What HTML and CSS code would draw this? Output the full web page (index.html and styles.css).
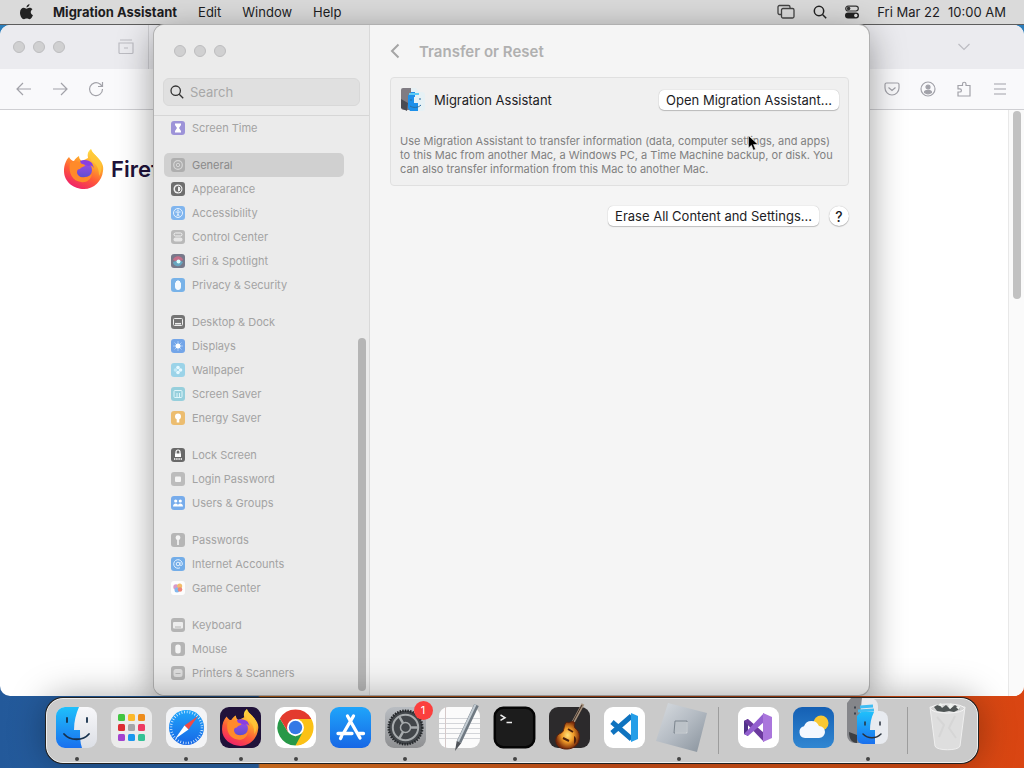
FILE: index.html
```html
<!doctype html>
<html lang="en">
<head>
    <meta charset="UTF-8">
    <meta name="viewport" content="width=device-width, initial-scale=1.0">
    <title>Migration Assistant</title>
    <link rel="stylesheet" href="styles.css">
</head>
<body>
<svg class="defs" aria-hidden="true">
    <defs>
        <linearGradient id="g-fox" x1=".8" y1="0" x2=".3" y2="1">
            <stop offset="0" stop-color="#fff44f"/>
            <stop offset=".35" stop-color="#ffa62b"/>
            <stop offset=".65" stop-color="#ff5a38"/>
            <stop offset="1" stop-color="#ee1f6b"/>
        </linearGradient>
        <linearGradient id="g-globe" x1="0" y1="0" x2="0" y2="1">
            <stop offset="0" stop-color="#a04be8"/>
            <stop offset="1" stop-color="#5c4fd0"/>
        </linearGradient>
        <linearGradient id="g-finder" x1="0" y1="0" x2="0" y2="1">
            <stop offset="0" stop-color="#1fc0fb"/>
            <stop offset="1" stop-color="#1a70ee"/>
        </linearGradient>
        <linearGradient id="g-light" x1="0" y1="0" x2="0" y2="1">
            <stop offset="0" stop-color="#f8f8fa"/>
            <stop offset="1" stop-color="#dcdfe6"/>
        </linearGradient>
        <linearGradient id="g-blue" x1="0" y1="0" x2="0" y2="1">
            <stop offset="0" stop-color="#1fa5fa"/>
            <stop offset="1" stop-color="#1767e6"/>
        </linearGradient>
        <linearGradient id="g-weather" x1="0" y1="0" x2="0" y2="1">
            <stop offset="0" stop-color="#1560b4"/>
            <stop offset="1" stop-color="#3187d2"/>
        </linearGradient>
        <linearGradient id="g-metal" x1="0" y1="0" x2="0" y2="1">
            <stop offset="0" stop-color="#b9bdc2"/>
            <stop offset="1" stop-color="#8f9092"/>
        </linearGradient>
        <linearGradient id="g-roblox" x1="0" y1="0" x2="1" y2="1">
            <stop offset="0" stop-color="#d9dde1"/>
            <stop offset=".5" stop-color="#b4bbc3"/>
            <stop offset="1" stop-color="#87919b"/>
        </linearGradient>
        <radialGradient id="g-guitar">
            <stop offset="0" stop-color="#ffe27a"/>
            <stop offset=".5" stop-color="#f09a28"/>
            <stop offset="1" stop-color="#7a2c0c"/>
        </radialGradient>
        <symbol id="fox" viewBox="0 0 40 40">
            <path fill="url(#g-fox)" d="M5 8c1 2 3 4 5 4 1-2 3-4 5-5 0 2 1 4 3 5l6-3c-1-4 0-7 3-9 1 4 4 5 7 9 4 4 6 8 5 13-1 10-9 18-19 18S0 33 0 22c0-6 2-11 5-14z"/>
            <circle cx="20" cy="21" r="8" fill="url(#g-globe)"/>
            <path fill="#ff8a2a" d="M6 14c4-3 9-2 12 1 2 0 3 1 3 2-2 1-4 1-5 3-2 0-3 1-3 3 0 4 4 6 8 5 3 0 5-2 7-3-1 6-6 9-11 8C9 32 4 25 6 14z"/>
            <path fill="#8a3fe0" d="M16 12c4-2 9-1 12 2l2 5c-2-3-4-3-6-2l-4-2-3-1z"/>
            <path fill="#ffc638" opacity=".8" d="M27 0c1 4 4 5 7 9 5 6 4 14 1 18 0-7-2-11-6-14-4-3-4-9-2-13z"/>
        </symbol>
    </defs>
</svg>

<header class="menubar">
    <svg class="apple" viewBox="0 0 14 17"><path d="M10.200 0c.2 1.600-1.300 3.600-3.200 3.700C6.800 2 8.500.2 10.200 0zM7 4.900c.8 0 1.700-1 3.300-1 1.200 0 2.300.6 3.100 1.600-2.700 1.600-2.200 5.300.6 6.300-.6 1.700-2.100 4.500-3.700 4.500-1.200 0-1.600-.7-3-.7s-1.900.7-3 .7C2.300 16.400 0 12.700 0 9.300c0-3.500 2.100-5.300 4.100-5.300 1.300 0 2.200.9 2.900.9z"/></svg>
    <nav class="menus">
        <button class="menu menu-app">Migration Assistant</button>
        <button class="menu">Edit</button>
        <button class="menu">Window</button>
        <button class="menu">Help</button>
    </nav>
    <div class="status">
        <svg width="18" height="16" viewBox="0 0 18 16" fill="none" stroke="#444" stroke-width="1.300"><path d="M4 10.500H2.500A1.500 1.500 0 0 1 1 9V3a1.500 1.500 0 0 1 1.500-1.500h9A1.500 1.500 0 0 1 13 3v1"/><rect x="4.500" y="4.500" width="12.500" height="9.500" rx="1.500"/></svg>
        <svg width="14" height="14" viewBox="0 0 14 14" fill="none" stroke="#222" stroke-width="1.500"><circle cx="6" cy="6" r="4.700"/><path d="M9.500 9.500l3.700 3.700"/></svg>
        <svg width="14" height="14" viewBox="0 0 14 14"><rect x=".7" y="1.200" width="12.600" height="4.800" rx="2.400" fill="none" stroke="#333" stroke-width="1.200"/><circle cx="3.600" cy="3.600" r="1.800" fill="#333"/><rect y="7.500" width="14" height="6" rx="3" fill="#222"/><circle cx="10.800" cy="10.500" r="1.700" fill="#ddd"/></svg>
        <span class="date">Fri Mar 22</span>
        <span class="time">10:00 AM</span>
    </div>
</header>

<main class="desktop">
    <section class="window browser">
        <div class="tabbar">
            <div class="lights"><i></i><i></i><i></i></div>
            <button class="tool tool-archive" aria-label="Recent browsing"><svg viewBox="0 0 16 16"><path d="M2 1h12M1 4h14v9.500a1 1 0 0 1-1 1H2a1 1 0 0 1-1-1zM6 9h4"/></svg></button>
            <span class="tab-split"></span>
            <button class="tool tool-tabs" aria-label="List all tabs"><svg viewBox="0 0 16 16"><path d="M2.500 5L8 10.500 13.500 5"/></svg></button>
        </div>
        <div class="toolbar">
            <button class="tool" aria-label="Back"><svg viewBox="0 0 16 16"><path d="M15 8H1M7 2L1 8l6 6"/></svg></button>
            <button class="tool" aria-label="Forward"><svg viewBox="0 0 16 16"><path d="M1 8h14M9 2l6 6-6 6"/></svg></button>
            <button class="tool" aria-label="Reload"><svg viewBox="0 0 16 16"><path d="M14.500 8A6.500 6.500 0 1 1 12 3l2 2M14.500 1v4.500H10"/></svg></button>
            <span class="spacer"></span>
            <button class="tool" aria-label="Pocket"><svg viewBox="0 0 16 16"><path d="M2.500 2h11A1.500 1.500 0 0 1 15 3.500V7A7 7 0 0 1 1 7V3.500A1.500 1.500 0 0 1 2.500 2zM4.500 6.500L8 9.500l3.500-3"/></svg></button>
            <button class="tool" aria-label="Account"><svg viewBox="0 0 16 16"><circle cx="8" cy="8" r="7"/><circle cx="8" cy="6" r="2" fill="#a2a2a9"/><path fill="#a2a2a9" d="M4.500 11.500c0-3 7-3 7 0-2 1.500-5 1.500-7 0z"/></svg></button>
            <button class="tool" aria-label="Extensions"><svg viewBox="0 0 16 16"><path d="M2 4.500h4.500V3a1.700 1.700 0 0 1 3.500 0v1.500h4V15H2v-4h1.800a1.600 1.600 0 0 0 0-3.200H2z"/></svg></button>
            <button class="tool" aria-label="Menu"><svg viewBox="0 0 16 16"><path d="M2 3h12M2 8h12M2 13h12"/></svg></button>
        </div>
        <div class="page">
            <div class="brand">
                <svg width="40" height="40"><use href="#fox"/></svg>
                <span>Firefox</span>
            </div>
            <div class="page-scroll"><i></i></div>
        </div>
    </section>

    <section class="window settings">
        <aside class="sidebar">
            <div class="sidebar-top">
                <div class="lights"><i></i><i></i><i></i></div>
                <label class="search">
                    <svg width="14" height="14" viewBox="0 0 14 14" fill="none" stroke="#333" stroke-width="1.300"><circle cx="5.700" cy="5.700" r="4.700"/><path d="M9.200 9.200l4 4"/></svg>
                    <input type="text" placeholder="Search" aria-label="Search">
                </label>
            </div>
            <nav class="list">
                <div class="group">
                    <a href="#"><svg class="ico" viewBox="0 0 14 14"><rect width="14" height="14" rx="3" fill="#9d93d8"/><path fill="#fff" d="M4 2.500h6v1.500L8 7l2 3v1.500H4V10l2-3-2-3z"/></svg>Screen Time</a>
                </div>
                <div class="group">
                    <a href="#" class="active"><svg class="ico" viewBox="0 0 14 14"><rect width="14" height="14" rx="3" fill="#aeaeae"/><circle cx="7" cy="7" r="4.300" fill="none" stroke="#d6d6d6" stroke-width="1.200"/><circle cx="7" cy="7" r="1.700" fill="none" stroke="#d6d6d6"/></svg>General</a>
                    <a href="#"><svg class="ico" viewBox="0 0 14 14"><rect width="14" height="14" rx="3" fill="#6e6e6e"/><circle cx="7" cy="7" r="4.500" fill="#efefef"/><path fill="#6e6e6e" d="M7 4a3 3 0 0 0 0 6z"/><path fill="none" stroke="#6e6e6e" d="M7 4a3 3 0 0 1 0 6"/></svg>Appearance</a>
                    <a href="#"><svg class="ico" viewBox="0 0 14 14"><rect width="14" height="14" rx="3" fill="#80b5ee"/><circle cx="7" cy="7" r="4.500" fill="none" stroke="#e6f2ff"/><path d="M4.500 6h5M7 6v2l-1.300 2.500M7 8l1.300 2.500" fill="none" stroke="#e6f2ff"/><circle cx="7" cy="4.300" r=".8" fill="#e6f2ff"/></svg>Accessibility</a>
                    <a href="#"><svg class="ico" viewBox="0 0 14 14"><rect width="14" height="14" rx="3" fill="#b9b9b9"/><rect x="3" y="3" width="8" height="3" rx="1.500" fill="none" stroke="#f2f2f2"/><rect x="2.500" y="7.500" width="9" height="4" rx="2" fill="#e6e6e6"/></svg>Control Center</a>
                    <a href="#"><svg class="ico" viewBox="0 0 14 14"><rect width="14" height="14" rx="3" fill="#77798a"/><path d="M2 6c1-5 9-5 10 0L7 8z" fill="#c4708a"/><path d="M2 8c0 5 8 6 10 0L8 6z" fill="#67a6c0"/><circle cx="7.500" cy="7.500" r="2" fill="#dff"/></svg>Siri &amp; Spotlight</a>
                    <a href="#"><svg class="ico" viewBox="0 0 14 14"><rect width="14" height="14" rx="3" fill="#78b2e8"/><path fill="#f4faff" d="M4 6V4.500h1V3h1.300v-.7h1.400V3H9v1.500h1V9c0 2-1.300 3-3 3S4 10.500 4 9z"/></svg>Privacy &amp; Security</a>
                </div>
                <div class="group">
                    <a href="#"><svg class="ico" viewBox="0 0 14 14"><rect width="14" height="14" rx="3" fill="#747474"/><rect x="2.500" y="3.500" width="9" height="7" rx="1" fill="none" stroke="#eee"/><path d="M4 8.700h6" stroke="#eee" stroke-width="1.500"/></svg>Desktop &amp; Dock</a>
                    <a href="#"><svg class="ico" viewBox="0 0 14 14"><rect width="14" height="14" rx="3" fill="#73a5e8"/><path d="M7 2v10M2 7h10M3.500 3.500l7 7M10.500 3.500l-7 7" stroke="#a9cbf5"/><circle cx="7" cy="7" r="2.500" fill="#fff"/></svg>Displays</a>
                    <a href="#"><svg class="ico" viewBox="0 0 14 14"><rect width="14" height="14" rx="3" fill="#9bd3e8"/><circle cx="7" cy="4.500" r="1.800" fill="#e5f8ff"/><circle cx="7" cy="9.500" r="1.800" fill="#e5f8ff"/><circle cx="4.500" cy="7" r="1.800" fill="#c2e8f5"/><circle cx="9.500" cy="7" r="1.800" fill="#e5f8ff"/></svg>Wallpaper</a>
                    <a href="#"><svg class="ico" viewBox="0 0 14 14"><rect width="14" height="14" rx="3" fill="#96cfdc"/><rect x="3" y="3.500" width="8" height="7" rx="1" fill="none" stroke="#dff5fa"/><path d="M6 6v4M8.500 6v4" stroke="#dff5fa"/></svg>Screen Saver</a>
                    <a href="#"><svg class="ico" viewBox="0 0 14 14"><rect width="14" height="14" rx="3" fill="#ecbd70"/><circle cx="7" cy="5.500" r="3" fill="#fff"/><path d="M5.700 8h2.600v3.500H5.700z" fill="#fff"/></svg>Energy Saver</a>
                </div>
                <div class="group">
                    <a href="#"><svg class="ico" viewBox="0 0 14 14"><rect width="14" height="14" rx="3" fill="#696969"/><path d="M5 6V4a2 2 0 0 1 4 0v2" fill="none" stroke="#fff" stroke-width="1.200"/><rect x="4" y="5.500" width="6" height="3.500" fill="#fff"/><path d="M3 11h8" stroke="#fff" stroke-width="1.400" stroke-dasharray="1.400 .8"/></svg>Lock Screen</a>
                    <a href="#"><svg class="ico" viewBox="0 0 14 14"><rect width="14" height="14" rx="3" fill="#bcbcbc"/><rect x="4" y="4.500" width="6" height="5.500" rx="1" fill="#f4f4f4"/></svg>Login Password</a>
                    <a href="#"><svg class="ico" viewBox="0 0 14 14"><rect width="14" height="14" rx="3" fill="#77aceb"/><circle cx="4.700" cy="5" r="1.600" fill="#fff"/><circle cx="9.300" cy="5" r="1.600" fill="#fff"/><path fill="#fff" d="M2 10.500c0-4 5-4 5-.7 0-3.300 5-3.300 5 .7z"/></svg>Users &amp; Groups</a>
                </div>
                <div class="group">
                    <a href="#"><svg class="ico" viewBox="0 0 14 14"><rect width="14" height="14" rx="3" fill="#b6b6b6"/><circle cx="7" cy="4.700" r="2.400" fill="#f4f4f4"/><path d="M7 6v6" stroke="#f4f4f4" stroke-width="1.700"/></svg>Passwords</a>
                    <a href="#"><svg class="ico" viewBox="0 0 14 14"><rect width="14" height="14" rx="3" fill="#73ade8"/><circle cx="7" cy="7" r="1.800" fill="none" stroke="#e4f1ff"/><path d="M9 5v2.700c0 1.500 2.300 1.200 2.300-.7A4.300 4.300 0 1 0 9 10.800" fill="none" stroke="#e4f1ff"/></svg>Internet Accounts</a>
                    <a href="#"><svg class="ico" viewBox="0 0 14 14"><rect width="14" height="14" rx="3" fill="#fdfdfd"/><circle cx="5" cy="6" r="2.700" fill="#d99ac8"/><circle cx="8.700" cy="5" r="2.500" fill="#f3bd6a"/><circle cx="6" cy="9" r="2.500" fill="#82b8ee"/><circle cx="9" cy="8.500" r="2.300" fill="#ee8577"/></svg>Game Center</a>
                </div>
                <div class="group">
                    <a href="#"><svg class="ico" viewBox="0 0 14 14"><rect width="14" height="14" rx="3" fill="#b4b4b4"/><rect x="2" y="4" width="10" height="6.500" rx="1" fill="#ededed"/><path d="M4 9h6" stroke="#b4b4b4"/></svg>Keyboard</a>
                    <a href="#"><svg class="ico" viewBox="0 0 14 14"><rect width="14" height="14" rx="3" fill="#b4b4b4"/><rect x="4.300" y="2.500" width="5.400" height="9" rx="2.500" fill="#f4f4f4"/></svg>Mouse</a>
                    <a href="#"><svg class="ico" viewBox="0 0 14 14"><rect width="14" height="14" rx="3" fill="#b4b4b4"/><rect x="2.500" y="3" width="9" height="8" rx="2.500" fill="#dedede"/><path d="M4.500 7.500h5" stroke="#b4b4b4"/></svg>Printers &amp; Scanners</a>
                </div>
            </nav>
            <i class="sidebar-thumb"></i>
        </aside>

        <div class="pane">
            <div class="pane-top">
                <button class="back" aria-label="Back"><svg width="10" height="16" viewBox="0 0 10 16"><path d="M8.500 1.500L2 8l6.500 6.500"/></svg></button>
                <h1>Transfer or Reset</h1>
            </div>
            <div class="card">
                <div class="card-row">
                    <svg width="26" height="26" viewBox="0 0 26 26">
                        <path fill="#807c83" d="M3 1h8v22H4a3 3 0 0 1-3-3V3a2 2 0 0 1 2-2z"/>
                        <path d="M1 12l7 4-1 8-6-3z" fill="#4a4b52"/>
                        <path fill="#e6f1f5" d="M11 1h5l3 4h3a3 3 0 0 1 3 3v13a3 3 0 0 1-3 3h-9z"/>
                        <path d="M8 8h3V5h4v5h-1v6h4v8h-8l-2-3z" fill="#1d90ea"/>
                        <path d="M10 19c3 2 8 2 11-1M11 12v2M20 11v2" fill="none" stroke="#2a6ea0"/>
                        <path d="M9 7h10" stroke="#5ccbf5" stroke-width="2"/>
                    </svg>
                    <h2>Migration Assistant</h2>
                    <button class="btn">Open Migration Assistant...</button>
                </div>
                <p>Use Migration Assistant to transfer information (data, computer settings, and apps)<br>to this Mac from another Mac, a Windows PC, a Time Machine backup, or disk. You<br>can also transfer information from this Mac to another Mac.</p>
            </div>
            <div class="actions">
                <button class="btn">Erase All Content and Settings...</button>
                <button class="btn btn-help" aria-label="Help">?</button>
            </div>
        </div>
    </section>

    <nav class="dock">
        <button class="app running" aria-label="Finder"><svg viewBox="0 0 41 41"><rect width="41" height="41" rx="9" fill="url(#g-light)"/><path fill="url(#g-finder)" d="M9 0h14c-3 7-5 14-5 23h6c0 7 0 12 2 18H9a9 9 0 0 1-9-9V9a9 9 0 0 1 9-9z"/><path d="M11 11v4M31 11v4M8 27c6 7 19 7 25 0" fill="none" stroke="#16304c" stroke-width="1.800" stroke-linecap="round"/></svg></button>
        <button class="app" aria-label="Launchpad"><svg viewBox="0 0 41 41"><rect width="41" height="41" rx="9" fill="#ebebeb"/><g><rect x="7" y="7" width="7" height="7" rx="1.500" fill="#42c541"/><rect x="17" y="7" width="7" height="7" rx="1.500" fill="#fcb92b"/><rect x="27" y="7" width="7" height="7" rx="1.500" fill="#ed8c1c"/><rect x="7" y="17" width="7" height="7" rx="1.500" fill="#dd2c33"/><rect x="17" y="17" width="7" height="7" rx="1.500" fill="#a5a5a8"/><rect x="27" y="17" width="7" height="7" rx="1.500" fill="#ee3b62"/><rect x="7" y="27" width="7" height="7" rx="1.500" fill="#a343cf"/><rect x="17" y="27" width="7" height="7" rx="1.500" fill="#1b97ee"/><rect x="27" y="27" width="7" height="7" rx="1.500" fill="#34c295"/></g></svg></button>
        <button class="app running" aria-label="Safari"><svg viewBox="0 0 41 41"><rect width="41" height="41" rx="9" fill="#f3f4f6"/><circle cx="20.500" cy="20.500" r="17.500" fill="url(#g-blue)"/><circle cx="20.500" cy="20.500" r="15.500" fill="none" stroke="#d6ecff" stroke-width="2.500" stroke-dasharray=".8 1.900"/><path fill="#f04a45" d="M32 9L18.500 18.500l4 4z"/><path fill="#fff" d="M9 32l9.500-13.500 4 4z"/></svg></button>
        <button class="app running" aria-label="Firefox"><svg viewBox="0 0 41 41"><rect width="41" height="41" rx="9" fill="#20123a"/><use href="#fox" x="2" y="2" width="37" height="37"/></svg></button>
        <button class="app running" aria-label="Chrome"><svg viewBox="0 0 41 41"><rect width="41" height="41" rx="9" fill="#fff"/><path fill="#fbc116" d="M20.500 12h15.900a18 18 0 0 1-15.900 26.500z"/><path fill="#279847" d="M13 25l7.500 4.500 7-4-7 13A18 18 0 0 1 4.900 11.500z"/><path fill="#e33b2e" d="M4.900 11.500a18 18 0 0 1 31.200 0v.5H20.500L13 25z"/><circle cx="20.500" cy="20.500" r="8.500" fill="#fff"/><circle cx="20.500" cy="20.500" r="6.700" fill="#3579e6"/></svg></button>
        <button class="app" aria-label="App Store"><svg viewBox="0 0 41 41"><rect width="41" height="41" rx="9" fill="url(#g-blue)"/><path d="M23.500 9L13 27M17.500 9L30 31M8 26.500h14M27.500 26.500h6M11.500 29.500L10.500 31.500" fill="none" stroke="#fff" stroke-width="3.300" stroke-linecap="round"/></svg></button>
        <button class="app running" aria-label="System Settings"><svg viewBox="0 0 41 41"><rect width="41" height="41" rx="9" fill="url(#g-metal)"/><circle cx="20.500" cy="20.500" r="17" fill="#42464a"/><circle cx="20.500" cy="20.500" r="16.800" fill="none" stroke="#25282b" stroke-width="2.500" stroke-dasharray="1.400 1.200"/><circle cx="20.500" cy="20.500" r="12.700" fill="none" stroke="#a7abad" stroke-width="2"/><path d="M20.500 20.500H33M20.500 20.500L14.300 9.700M20.500 20.500L14.300 31.300" stroke="#a7abad" stroke-width="2.500"/><circle cx="20.500" cy="20.500" r="5" fill="#42464a" stroke="#a7abad" stroke-width="1.500"/></svg><span class="badge">1</span></button>
        <button class="app" aria-label="TextEdit"><svg viewBox="0 0 41 41"><rect width="41" height="41" rx="9" fill="#fbfbfb"/><path d="M0 11.500h41M0 16.500h41M0 21.500h41M0 26.500h41M0 31.500h41" stroke="#d3d5d9"/><path d="M6.500 0v41" stroke="#d5c9c9"/><path d="M37.500-2L20 35" stroke="#6f7982" stroke-width="5"/><path d="M36.500-2.500L19 34.500" stroke="#c3ccd3" stroke-width="2"/><path d="M17.700 34l4.600 2-6.300 8z" fill="#50545a"/></svg></button>
        <button class="app running" aria-label="Terminal"><svg viewBox="0 0 41 41"><rect x=".8" y=".8" width="39.400" height="39.400" rx="8.500" fill="#1c1c1c" stroke="#050505" stroke-width="2.500"/><path d="M6.500 8l4.500 2.700-4.500 2.700M12.500 15.500H18" fill="none" stroke="#eee" stroke-width="1.500"/></svg></button>
        <button class="app" aria-label="GarageBand"><svg viewBox="0 0 41 41"><rect width="41" height="41" rx="9" fill="#2c2a2c"/><path d="M34-3L21 21" stroke="#a5917d" stroke-width="3"/><path d="M33-2L20 22" stroke="#443127"/><path fill="url(#g-guitar)" stroke="#5a210c" d="M18 15c2 2 5-2 7 0 2 1-1 3 1 6 6 4 5 11 3 15-3 6-13 8-19 4-5-4-4-12 2-14 4-1 2-9 6-11z"/><path d="M19 22l5 3M14 31l6 3" stroke="#4b210d" stroke-width="2"/><path d="M25 29c3 2 3 6 0 8z" fill="#50200d"/></svg></button>
        <button class="app" aria-label="Visual Studio Code"><svg viewBox="0 0 41 41"><rect width="41" height="41" rx="9" fill="#fff"/><path d="M27.500 9L8 26M27.500 32L8 15" stroke="#0f73bf" stroke-width="5"/><path fill="#259ee8" d="M27 6l7 3v23l-7 3z"/></svg></button>
        <button class="app running" aria-label="Roblox"><svg viewBox="0 0 41 41"><path fill="url(#g-roblox)" d="M10-4L49 6 39 45-2 34z"/><path fill="#bcc2c8" stroke="#7c858e" d="M17 14h12v12H16z"/><path d="M17 26h12V15" fill="none" stroke="#e3e6e9"/></svg></button>
        <span class="dock-split"></span>
        <button class="app" aria-label="Visual Studio"><svg viewBox="0 0 41 41"><rect width="41" height="41" rx="9" fill="#fff"/><path fill="#51318a" d="M6 14l4-2v17l-4-2z"/><path fill="#6b3a9e" d="M10 12l16 14v9L6 14z"/><path fill="#9360cf" d="M26 6v9L10 29l-4-2z"/><path fill="#aa76dc" d="M25 6l9 4v21l-9 4z"/></svg></button>
        <button class="app" aria-label="Weather"><svg viewBox="0 0 41 41"><rect width="41" height="41" rx="9" fill="url(#g-weather)"/><circle cx="28" cy="16" r="7.500" fill="#f9c833"/><path fill="#f4f8ff" d="M12 31a6 6 0 0 1-1-11.800 8 8 0 0 1 15-.2 6 6 0 1 1 0 12z"/></svg></button>
        <button class="app running" aria-label="Migration Assistant"><svg viewBox="0 0 41 41"><path fill="#85868a" d="M4-9h14v45H8a8 8 0 0 1-8-8V-4z"/><path fill="#e9e9ec" d="M15-9h8a8 8 0 0 1 8 8v9H13z"/><path fill="#e8ebf0" d="M20 4h13a8 8 0 0 1 8 8v17a8 8 0 0 1-8 8H20z"/><path fill="url(#g-finder)" d="M14 5h13c-3 6-4 12-4 18h5v14H16a6 6 0 0 1-6-6V9z"/><path fill="#3d3f43" d="M2 25l8 3v8c-5 0-8-4-8-11z"/><path d="M13 0l13-1M11 4l16-1" stroke="#3fbdf4" stroke-width="3"/><path d="M8 0v1M8 6v1M18 15v3M33 15v3M16 27c5 5 13 5 18 0" fill="none" stroke="#27313c" stroke-width="1.500" stroke-linecap="round"/></svg></button>
        <span class="dock-split"></span>
        <button class="app" aria-label="Trash"><svg viewBox="0 0 41 41"><path fill="#dedede" stroke="#efefef" d="M3 0h35l-5 39c-1 5-24 5-25 0z"/><ellipse cx="20.500" cy="1.500" rx="17" ry="4.500" fill="#d4d4d4" stroke="#f6f6f6"/><path fill="#4f5555" d="M7 0l5-3 3 4 4-3 4 4 5-4 5 4-6 3-5-1-5 1-7-1z"/><path fill="#eef2ee" d="M10-2l4-2 2 4zM21-1l3-3 2 3-3 3zM29 0l4-1-1 4z"/><path d="M10 10l7 8-5 12M28 9l-6 12 7 10" fill="none" stroke="#d6d6d6" stroke-width="2"/></svg></button>
    </nav>

    <svg class="cursor" viewBox="0 0 11 17"><path d="M.5.700V13l2.900-2.800 2 5 2.100-.9-2-4.800H10z" fill="#000" stroke="#fff" stroke-width=".5"/></svg>
</main>
</body>
</html>
```

FILE: styles.css
```css
* {
    box-sizing: border-box;
}
body {
    display: flex;
    flex-direction: column;
    height: 100vh;
    margin: 0;
    overflow: hidden;
    font-family: Inter, "Liberation Sans", sans-serif;
    font-size: 13px;
    color: #1d1d1f;
}
button {
    padding: 0;
    border: 0;
    background: none;
    font: inherit;
    color: inherit;
}
svg {
    display: block;
    flex: none;
}
.defs {
    position: absolute;
    width: 0;
    height: 0;
}

/* menu bar */
.menubar {
    display: flex;
    align-items: center;
    height: 25px;
    padding: 0 18px 1px 20px;
    background: #dadada;
    border-bottom: 1px solid #5d5d5d;
}
.apple {
    width: 13px;
    height: 16px;
    margin-right: 20px;
    fill: #222;
}
.menus {
    display: flex;
    gap: 21px;
}
.menu-app {
    font-weight: 700;
}
.status {
    display: flex;
    align-items: center;
    gap: 18px;
    margin-left: auto;
    white-space: nowrap;
}
.time {
    margin-left: -10px;
}

/* desktop */
.desktop {
    position: relative;
    flex: 1;
    background:
        linear-gradient(#2c7dba, #2c7dba) 0 0 / 100% 40px no-repeat,
        linear-gradient(90deg, #23599a, #2b65a8 258px, #e57a22 260px, #d3521a 60%, #dc5416 80%, #d94512);
}
.window {
    position: absolute;
    top: 0;
    overflow: hidden;
    border-radius: 10px;
}
.lights {
    display: flex;
    gap: 8px;
}
.lights i {
    width: 12px;
    height: 12px;
    border: 1px solid #bdbdbf;
    border-radius: 50%;
    background: #d0d0d1;
}

/* browser */
.browser {
    display: flex;
    flex-direction: column;
    left: 0;
    right: 0;
    bottom: 72px;
    background: #fff;
}
.tabbar {
    display: flex;
    align-items: center;
    height: 44px;
    padding: 0 52px 0 13px;
    background: #ebebef;
}
.tool svg {
    width: 16px;
    height: 16px;
    fill: none;
    stroke: #a2a2a9;
    stroke-width: 1.2;
}
.tabbar .tool svg {
    stroke: #bcbcc2;
}
.tool-archive {
    margin-left: 53px;
}
.tab-split {
    width: 1px;
    height: 100%;
    margin-left: 14px;
    background: #d0d0d4;
}
.tool-tabs {
    margin-left: auto;
}
.toolbar {
    display: flex;
    align-items: center;
    gap: 20px;
    height: 41px;
    padding: 0 16px;
    background: #f9f9fb;
    border-bottom: 1px solid #cfcfd3;
}
.spacer {
    flex: 1;
}
.page {
    display: flex;
    flex: 1;
    justify-content: space-between;
}
.brand {
    display: flex;
    align-items: center;
    gap: 7px;
    height: 40px;
    margin: 39px 0 0 64px;
    font-size: 22px;
    font-weight: 600;
    color: #20123a;
}
.page-scroll {
    width: 16px;
    padding: 1px 3px 0 4px;
    border-left: 1px solid #e8e8e8;
    background: #fafafa;
}
.page-scroll i {
    display: block;
    height: 188px;
    border-radius: 4px;
    background: #c1c1c1;
}

/* settings window */
.settings {
    display: flex;
    left: 154px;
    right: 155px;
    bottom: 73px;
    background: #f5f5f5;
    box-shadow: 0 0 0 1px #b0b0b0, 0 8px 36px rgba(0, 0, 0, 0.4);
}
.sidebar {
    position: relative;
    display: flex;
    flex-direction: column;
    width: 216px;
    border-right: 1px solid #d9d9d9;
    background: #ebebeb;
}
.sidebar-top {
    padding: 20px 9px 9px;
    border-bottom: 1px solid #d6d6d6;
}
.sidebar .lights {
    padding-left: 11px;
}
.search {
    display: flex;
    align-items: center;
    gap: 6px;
    height: 28px;
    margin-top: 21px;
    padding: 0 6px;
    border: 1px solid #d8d8d8;
    border-radius: 6px;
    background: #e0e0e0;
}
.search input {
    width: 100%;
    padding: 0;
    border: 0;
    outline: 0;
    background: none;
    font: inherit;
}
.search input::placeholder {
    color: #a8a8a8;
}
.list {
    flex: 1;
    padding-left: 10px;
    overflow: hidden;
    font-size: 11px;
}
.group {
    margin-bottom: 13px;
}
.list a {
    display: flex;
    align-items: center;
    gap: 7px;
    width: 180px;
    height: 24px;
    padding-left: 7px;
    border-radius: 5px;
    color: #a3a3a3;
    text-decoration: none;
}
.list .active {
    background: #d0d0d0;
    color: #8a8a8a;
}
.ico {
    width: 14px;
    height: 14px;
}
.sidebar-thumb {
    position: absolute;
    top: 313px;
    right: 3px;
    bottom: 4px;
    width: 8px;
    border-radius: 4px;
    background: #b5b5b5;
}
.pane {
    flex: 1;
    padding: 16px 20px 0;
}
.pane-top {
    display: flex;
    align-items: center;
    gap: 19px;
    height: 20px;
}
.back path {
    fill: none;
    stroke: #a5a5a5;
    stroke-width: 2;
}
h1, h2, p {
    margin: 0;
}
h1 {
    font-size: 15px;
    font-weight: 600;
    color: #b0b0b0;
}
h2 {
    font-size: 13px;
    font-weight: 400;
}
.card {
    margin-top: 16px;
    padding: 9px;
    border: 1px solid #e0e0e0;
    border-radius: 4px;
    background: #f0f0f0;
}
.card-row {
    display: flex;
    align-items: center;
    gap: 8px;
    height: 26px;
}
.card-row .btn {
    margin-left: auto;
}
.card p {
    margin-top: 21px;
    font-size: 11px;
    line-height: 14px;
    color: #808080;
    white-space: nowrap;
}
.btn {
    height: 20px;
    padding: 0 7px 1px;
    border-radius: 5px;
    background: #fff;
    box-shadow: 0 0 1px rgba(0, 0, 0, 0.3), 0 1px 1px rgba(0, 0, 0, 0.2);
    white-space: nowrap;
}
.actions {
    display: flex;
    justify-content: flex-end;
    gap: 10px;
    margin-top: 20px;
}
.btn-help {
    width: 20px;
    padding: 0;
    border-radius: 50%;
    font-size: 14px;
    font-weight: 500;
}

/* dock */
.dock {
    position: absolute;
    left: 46px;
    right: 46px;
    bottom: 5px;
    display: flex;
    justify-content: space-between;
    height: 65px;
    padding: 8px 9px 0;
    border: 1px solid #efefef;
    border-radius: 17px;
    background: #cacaca;
    box-shadow: 0 0 0 1px #222, 0 0 36px rgba(0, 0, 0, 0.35);
}
.app {
    position: relative;
    display: flex;
    flex-direction: column;
    align-items: center;
    gap: 9px;
    width: 41px;
}
.app svg {
    width: 41px;
    height: 41px;
    overflow: visible;
}
.running::after {
    content: '';
    width: 4px;
    height: 4px;
    border-radius: 50%;
    background: #444;
}
.badge {
    position: absolute;
    top: -6px;
    right: -7px;
    width: 19px;
    height: 19px;
    border-radius: 50%;
    background: #fb3f3d;
    color: #fff;
    font-size: 11px;
    line-height: 19px;
    text-align: center;
}
.dock-split {
    width: 1px;
    height: 47px;
    margin: 0 5px;
    background: #9d9d9d;
}

.cursor {
    position: absolute;
    top: 110px;
    left: 748px;
    width: 11px;
    height: 17px;
}
```
